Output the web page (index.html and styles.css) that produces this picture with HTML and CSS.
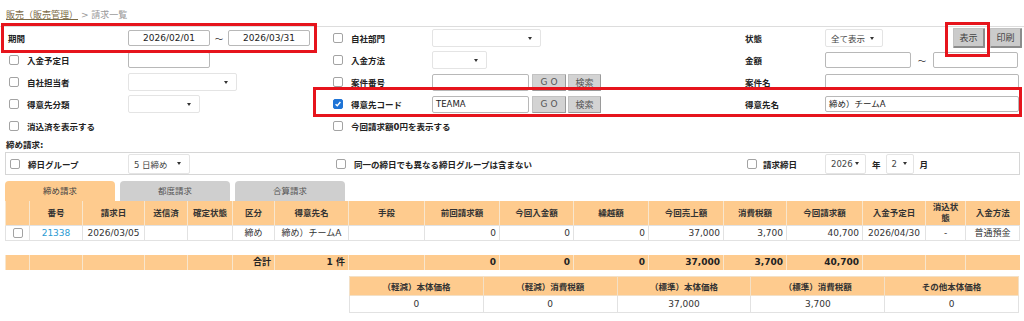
FILE: index.html
```html
<!DOCTYPE html>
<html lang="ja">
<head>
    <meta charset="UTF-8">
    <title>請求一覧</title>
    <link rel="stylesheet" href="styles.css">
</head>
<body>
<div class="page">
    <div class="breadcrumb"><a href="#">販売（販売管理）</a> &gt; 請求一覧</div>

    <div class="search">
        <div class="grid">
            <!-- row 1 -->
            <div class="lbl c1 plain">期間</div>
            <div class="fld">
                <span class="inp date">2026/02/01</span><span class="tilde">～</span><span class="inp date">2026/03/31</span>
            </div>
            <div class="lbl"><span class="cb"></span>自社部門</div>
            <div class="fld"><span class="sel w109"></span></div>
            <div class="lbl plain">状態</div>
            <div class="fld">
                <span class="sel w58">全て表示</span>
                <button class="btn big first">表示</button>
                <button class="btn big">印刷</button>
            </div>

            <!-- row 2 -->
            <div class="lbl c1"><span class="cb"></span>入金予定日</div>
            <div class="fld"><span class="inp w82"></span></div>
            <div class="lbl"><span class="cb"></span>入金方法</div>
            <div class="fld"><span class="sel w55"></span></div>
            <div class="lbl plain">金額</div>
            <div class="fld"><span class="inp w86"></span><span class="tilde wide">～</span><span class="inp w85"></span></div>

            <!-- row 3 -->
            <div class="lbl c1"><span class="cb"></span>自社担当者</div>
            <div class="fld"><span class="sel w109"></span></div>
            <div class="lbl"><span class="cb"></span>案件番号</div>
            <div class="fld"><span class="inp w97 tall"></span><button class="btn go">GO</button><button class="btn find">検索</button></div>
            <div class="lbl plain">案件名</div>
            <div class="fld"><span class="inp w194"></span></div>

            <!-- row 4 -->
            <div class="lbl c1"><span class="cb"></span>得意先分類</div>
            <div class="fld"><span class="sel w72"></span></div>
            <div class="lbl"><span class="cb on"><svg viewBox="0 0 10 10" width="8" height="8"><path d="M2 5.2 L4.1 7.2 L8 2.6" fill="none" stroke="#fff" stroke-width="1.8"/></svg></span>得意先コード</div>
            <div class="fld"><span class="inp w97 tall">TEAMA</span><button class="btn go">GO</button><button class="btn find">検索</button></div>
            <div class="lbl plain">得意先名</div>
            <div class="fld"><span class="inp w194">締め）チームA</span></div>

            <!-- row 5 -->
            <div class="lbl c1 span2"><span class="cb"></span>消込済を表示する</div>
            <div class="lbl span2"><span class="cb"></span>今回請求額0円を表示する</div>
        </div>

        <div class="shime-title">締め請求:</div>
        <div class="shime">
            <div class="lbl s1"><span class="cb"></span>締日グループ</div>
            <div class="fld"><span class="sel w62 full">5 日締め</span></div>
            <div class="lbl s3 span2"><span class="cb"></span>同一の締日でも異なる締日グループは含まない</div>
            <div class="lbl s5"><span class="cb"></span>請求締日</div>
            <div class="fld">
                <span class="sel w41 full">2026</span><span class="unit">年</span><span class="sel w28 full">2</span><span class="unit">月</span>
            </div>
        </div>
    </div>

    <div class="tabs">
        <div class="tab active">締め請求</div>
        <div class="tab">都度請求</div>
        <div class="tab">合算請求</div>
    </div>

    <table class="list">
        <colgroup>
            <col style="width:24px"><col style="width:53px"><col style="width:62px"><col style="width:43px">
            <col style="width:45px"><col style="width:42px"><col style="width:74px"><col style="width:76px">
            <col style="width:75px"><col style="width:74px"><col style="width:75px"><col style="width:75px">
            <col style="width:63px"><col style="width:76px"><col style="width:63px"><col style="width:40px">
            <col style="width:54px">
        </colgroup>
        <thead>
            <tr>
                <th></th><th>番号</th><th>請求日</th><th>送信済</th><th>確定状態</th><th>区分</th><th>得意先名</th>
                <th>手段</th><th>前回請求額</th><th>今回入金額</th><th>繰越額</th><th>今回売上額</th><th>消費税額</th>
                <th>今回請求額</th><th>入金予定日</th><th class="narrow">消込状態</th><th>入金方法</th>
            </tr>
        </thead>
        <tbody>
            <tr>
                <td class="c"><span class="cb"></span></td>
                <td class="c"><a href="#" class="link">21338</a></td>
                <td class="c">2026/03/05</td>
                <td></td><td></td>
                <td class="c">締め</td>
                <td class="c">締め）チームA</td>
                <td></td>
                <td class="r">0</td><td class="r">0</td><td class="r">0</td>
                <td class="r">37,000</td><td class="r">3,700</td><td class="r">40,700</td>
                <td class="c">2026/04/30</td><td class="c">-</td><td class="c">普通預金</td>
            </tr>
        </tbody>
    </table>

    <table class="total">
        <colgroup>
            <col style="width:24px"><col style="width:53px"><col style="width:62px"><col style="width:43px">
            <col style="width:45px"><col style="width:42px"><col style="width:74px"><col style="width:76px">
            <col style="width:75px"><col style="width:74px"><col style="width:75px"><col style="width:75px">
            <col style="width:63px"><col style="width:76px"><col style="width:63px"><col style="width:40px">
            <col style="width:54px">
        </colgroup>
        <tr>
            <td></td><td></td><td></td><td></td><td></td>
            <td class="r">合計</td><td class="r">1 件</td><td></td>
            <td class="r">0</td><td class="r">0</td><td class="r">0</td>
            <td class="r">37,000</td><td class="r">3,700</td><td class="r">40,700</td>
            <td></td><td></td><td></td>
        </tr>
    </table>

    <table class="summary">
        <tr>
            <th>（軽減）本体価格</th><th>（軽減）消費税額</th><th>（標準）本体価格</th><th>（標準）消費税額</th><th>その他本体価格</th>
        </tr>
        <tr>
            <td>0</td><td>0</td><td>37,000</td><td>3,700</td><td>0</td>
        </tr>
    </table>

    <!-- highlight boxes drawn over the form -->
    <div class="mark mark-period"></div>
    <div class="mark mark-customer"></div>
    <div class="mark mark-show"></div>
</div>
</body>
</html>
```

FILE: styles.css
```css
body {
    margin: 0;
    font-family: "DejaVu Sans", "Noto Sans CJK JP", sans-serif;
    font-size: 8.5px;
    color: #333;
    background: #fff;
}
.page {
    position: relative;
    width: 1024px;
    height: 321px;
    overflow: hidden;
}
.breadcrumb {
    height: 14px;
    line-height: 14px;
    padding: 8px 0 0 6px;
    font-size: 9px;
    color: #999;
}
.breadcrumb a {
    color: #7b6a45;
    text-decoration: underline;
}
.search {
    margin-top: 4px;
    border-top: 1px solid #ddd;
}
.grid {
    display: grid;
    grid-template-columns: 128px 205px 99px 313px 80px 1fr;
    grid-auto-rows: 22px;
    align-items: center;
}
.lbl {
    display: flex;
    align-items: center;
    gap: 8px;
    font-weight: bold;
    color: #222;
    white-space: nowrap;
}
.lbl.c1 {
    padding-left: 9px;
}
.lbl.c1.plain {
    padding-left: 8px;
}
.span2 {
    grid-column: span 2;
}
.fld {
    display: flex;
    align-items: center;
}
.cb {
    display: inline-block;
    box-sizing: border-box;
    width: 10px;
    height: 10px;
    border: 1px solid #a3a3a3;
    border-radius: 2px;
    background: #fff;
    flex: none;
    vertical-align: middle;
}
.cb.on {
    background: #1f74d6;
    border-color: #1f74d6;
    display: flex;
    align-items: center;
    justify-content: center;
}
.inp {
    box-sizing: border-box;
    height: 16px;
    line-height: 14px;
    border: 1px solid #b8b8b8;
    border-radius: 2px;
    background: #fff;
    padding: 0 3px;
    color: #222;
    white-space: nowrap;
}
.inp.tall {
    height: 17px;
    line-height: 15px;
}
.date {
    width: 82px;
    text-align: center;
    font-size: 9px;
}
.tilde {
    width: 18px;
    text-align: center;
    color: #333;
}
.tilde.wide {
    width: 22px;
}
.w82 { width: 82px; }
.w85 { width: 85px; }
.w86 { width: 86px; }
.w97 { width: 97px; }
.w194 { width: 194px; }
.sel {
    box-sizing: border-box;
    height: 18px;
    display: flex;
    align-items: center;
    border: 1px solid #e4e4e4;
    border-radius: 2px;
    background: #fff;
    padding: 0 8px 0 5px;
    color: #444;
    white-space: nowrap;
}
.sel::after {
    content: "";
    margin-left: auto;
    border-left: 2.5px solid transparent;
    border-right: 2.5px solid transparent;
    border-top: 3px solid #333;
}
.sel.full {
    height: 20px;
}
.w28 { width: 28px; padding-right: 6px; }
.w41 { width: 41px; padding-right: 6px; }
.w55 { width: 55px; }
.w58 { width: 58px; }
.w62 { width: 62px; }
.w72 { width: 72px; }
.w109 { width: 109px; }
.btn {
    box-sizing: border-box;
    height: 17px;
    padding: 0;
    font-family: inherit;
    font-size: 9px;
    color: #555;
    background: #d3d3d3;
    border: 1px solid #c2c2c2;
    border-right-color: #9a9a9a;
    border-bottom-color: #9a9a9a;
    border-radius: 1px;
}
.btn.go {
    width: 34px;
    margin-left: 3px;
    letter-spacing: 3px;
    text-indent: 3px;
}
.btn.find {
    width: 33px;
    margin-left: 2px;
}
.btn.big {
    width: 32px;
    height: 20px;
    margin-left: 5px;
    color: #444;
    background: #cbcbcb;
    border-right: 2px solid #8c8c8c;
    border-bottom: 2px solid #8c8c8c;
}
.btn.big.first {
    margin-left: 70px;
}
.shime-title {
    height: 14px;
    line-height: 14px;
    margin-top: 1px;
    padding-left: 6px;
    font-weight: bold;
    color: #222;
}
.shime {
    display: grid;
    grid-template-columns: 122px 205px 99px 313px 80px 1fr;
    grid-template-rows: 21px;
    align-items: center;
    margin: 0 4px 0 5px;
    border: 1px solid #d6d6d6;
}
.lbl.s1 { padding-left: 4px; }
.lbl.s3 { padding-left: 3px; grid-column: 3 / span 2; }
.lbl.s5 { padding-left: 2px; gap: 6px; }
.unit {
    font-weight: bold;
    color: #222;
    margin: 0 5px 0 6px;
}
.tabs {
    display: flex;
    gap: 5px;
    margin: 6px 0 0 5px;
}
.tab {
    width: 110px;
    height: 20px;
    line-height: 20px;
    text-align: center;
    background: #cfcfcf;
    color: #555;
    border-radius: 4px 4px 0 0;
}
.tab.active {
    background: #fecb8e;
    color: #444;
}
table {
    border-collapse: collapse;
    table-layout: fixed;
}
.list, .total {
    width: 1014px;
    margin-left: 5px;
}
.list th {
    height: 24px;
    background: #fecb8e;
    font-weight: bold;
    color: #333;
    padding: 0 2px;
    line-height: 11px;
    border-left: 1px solid #f8e6cd;
}
.list th.narrow {
    padding: 0 5px;
}
.list td {
    height: 14px;
    line-height: 13px;
    padding: 0 3px;
    border: 1px solid #e2e2e2;
    color: #333;
    font-size: 9px;
    white-space: nowrap;
}
.c { text-align: center; }
.r { text-align: right; }
.link {
    color: #2b9ad2;
    text-decoration: none;
}
.total {
    margin-top: 14px;
}
.total td {
    height: 15px;
    line-height: 13px;
    padding: 0 3px;
    background: #fecb8e;
    font-weight: bold;
    font-size: 9px;
    color: #222;
    border-left: 1px solid #f8e6cd;
    white-space: nowrap;
}
.summary {
    width: 670px;
    margin: 6px 0 0 349px;
}
.summary th {
    height: 16px;
    background: #fecb8e;
    font-weight: bold;
    color: #333;
    border: 1px solid #f3e0c6;
}
.summary td {
    height: 14px;
    text-align: center;
    border: 1px solid #e2e2e2;
    font-size: 9px;
    color: #333;
}
/* red annotation frames */
.mark {
    position: absolute;
    box-sizing: border-box;
    border: 3px solid #e6141c;
}
.mark-period {
    left: 1px;
    top: 23px;
    width: 316px;
    height: 30px;
}
.mark-customer {
    left: 313px;
    top: 87px;
    width: 709px;
    height: 30px;
}
.mark-show {
    left: 945px;
    top: 22px;
    width: 45px;
    height: 35px;
}
```
